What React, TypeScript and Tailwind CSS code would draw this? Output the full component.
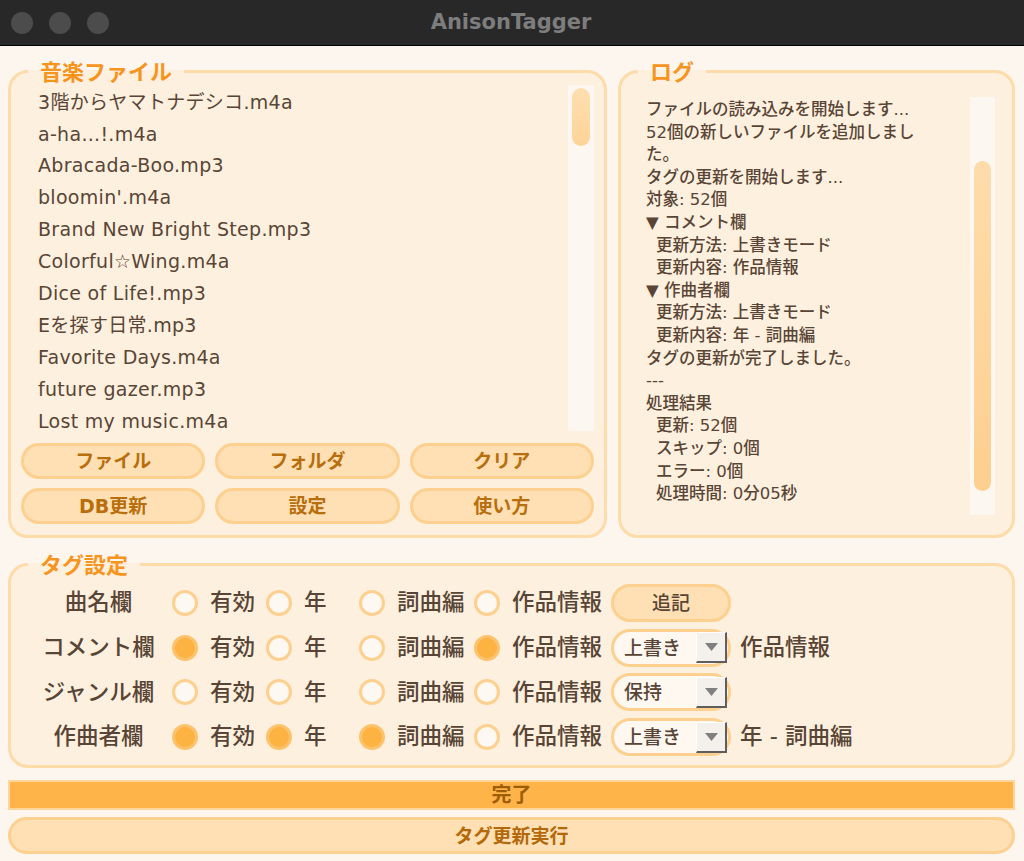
const files = [
  '3階からヤマトナデシコ.m4a',
  'a-ha...!.m4a',
  'Abracada-Boo.mp3',
  "bloomin'.m4a",
  'Brand New Bright Step.mp3',
  'Colorful☆Wing.m4a',
  'Dice of Life!.mp3',
  'Eを探す日常.mp3',
  'Favorite Days.m4a',
  'future gazer.mp3',
  'Lost my music.m4a',
]

const logLines: [string, boolean][] = [
  ['ファイルの読み込みを開始します...', false],
  ['52個の新しいファイルを追加しまし', false],
  ['た。', false],
  ['タグの更新を開始します...', false],
  ['対象: 52個', false],
  ['▼ コメント欄', false],
  ['更新方法: 上書きモード', true],
  ['更新内容: 作品情報', true],
  ['▼ 作曲者欄', false],
  ['更新方法: 上書きモード', true],
  ['更新内容: 年 - 詞曲編', true],
  ['タグの更新が完了しました。', false],
  ['---', false],
  ['処理結果', false],
  ['更新: 52個', true],
  ['スキップ: 0個', true],
  ['エラー: 0個', true],
  ['処理時間: 0分05秒', true],
]

type Row = {
  label: string
  checks: boolean[]
  control: 'button' | 'select'
  value: string
  note?: string
}

const rows: Row[] = [
  { label: '曲名欄', checks: [false, false, false, false], control: 'button', value: '追記' },
  { label: 'コメント欄', checks: [true, false, false, true], control: 'select', value: '上書き', note: '作品情報' },
  { label: 'ジャンル欄', checks: [false, false, false, false], control: 'select', value: '保持' },
  { label: '作曲者欄', checks: [true, true, true, false], control: 'select', value: '上書き', note: '年 - 詞曲編' },
]

const options = ['有効', '年', '詞曲編', '作品情報']
const cellWidths = ['w-[94px]', 'w-[93px]', 'w-[115px]', 'w-[137px]']

function Legend({ children }: { children: string }) {
  return (
    <legend className="ml-[7px] px-3 font-['Noto_Sans','Noto_Sans_CJK_JP',sans-serif] text-[22px] leading-[28px] font-bold text-[#f7941d]">
      {children}
    </legend>
  )
}

function Radio({ on }: { on: boolean }) {
  return (
    <span
      className={`w-[26px] h-[26px] rounded-full border-[3px] flex-shrink-0 ${
        on ? 'bg-[#fdb342] border-[#fdc26c]' : 'bg-[#fef8f2] border-[#fdd08f]'
      }`}
    />
  )
}

function PillButton({ children }: { children: string }) {
  return (
    <button className="h-[36px] rounded-full border-[3px] border-[#fdd08f] bg-[#fee0b4] text-[19px] font-bold text-[#b86e0c]">
      {children}
    </button>
  )
}

function Select({ value }: { value: string }) {
  return (
    <div className="w-[120px] h-[38px] rounded-full border-[3px] border-[#fdd08f] bg-[#fef8f1] flex items-center justify-between pl-[10px] pr-[1px]">
      <span className="text-[19px] font-medium text-[#584535]">{value}</span>
      <span className="w-[31px] h-[31px] flex items-center justify-center bg-[#f4f1ec] border-l border-t border-white border-r-2 border-b-2 border-r-[#5e5e5e] border-b-[#5e5e5e]">
        <svg width="13" height="8" viewBox="0 0 13 8">
          <polygon points="0,0 13,0 6.5,8" fill="#808080" />
        </svg>
      </span>
    </div>
  )
}

export default function App() {
  return (
    <div className="w-[1024px] h-[861px] overflow-hidden bg-[#fdf6ef] text-[#584535] font-['DejaVu_Sans','Noto_Sans_CJK_JP',sans-serif]">
      {/* title bar */}
      <div className="h-[46px] bg-[#282828] border-b border-black flex items-center">
        <div className="flex gap-[16px] pl-[11px]">
          <span className="w-[22px] h-[22px] rounded-full bg-[#4c4c4c]" />
          <span className="w-[22px] h-[22px] rounded-full bg-[#4c4c4c]" />
          <span className="w-[22px] h-[22px] rounded-full bg-[#4c4c4c]" />
        </div>
        <div className="flex-1 text-center pr-[111px] text-[21px] font-bold text-[#7d7d7d]">AnisonTagger</div>
      </div>

      <div className="pl-[8px] pr-[9px]">
        <div className="flex gap-[11px] mt-[11px]">
          {/* music files */}
          <fieldset className="w-[599px] min-w-0 rounded-[20px] border-[3px] border-[#fddcaa] bg-[#fef0df] px-[10px] pb-[8px]">
            <Legend>音楽ファイル</Legend>
            <div className="flex h-[348px]">
              <ul className="flex-1 pl-[17px] pt-[1px] overflow-hidden">
                {files.map((f) => (
                  <li key={f} className="h-[31.9px] flex items-center text-[19px] tracking-[0.3px] whitespace-nowrap">
                    {f}
                  </li>
                ))}
              </ul>
              <div className="w-[26px] h-[346px] bg-[#fdf7f1] px-[4px] pt-[3px]">
                <div className="h-[58px] rounded-full bg-gradient-to-b from-[#fedfb0] to-[#fdd397]" />
              </div>
            </div>
            <div className="grid grid-cols-3 gap-x-[10px] gap-y-[9px] mt-[10px]">
              <PillButton>ファイル</PillButton>
              <PillButton>フォルダ</PillButton>
              <PillButton>クリア</PillButton>
              <PillButton>DB更新</PillButton>
              <PillButton>設定</PillButton>
              <PillButton>使い方</PillButton>
            </div>
          </fieldset>

          {/* log */}
          <fieldset className="flex-1 min-w-0 rounded-[20px] border-[3px] border-[#fddcaa] bg-[#fef0df] px-[10px] pb-[10px]">
            <Legend>ログ</Legend>
            <div className="flex h-[428px] mt-[12px]">
              <div className="flex-1 pl-[15px] pt-[2px] text-[16.5px] font-medium">
                {logLines.map(([t, indent], i) => (
                  <div key={i} className={`h-[22.6px] leading-[22.6px] whitespace-nowrap ${indent ? 'pl-[10px]' : ''}`}>
                    {t}
                  </div>
                ))}
              </div>
              <div className="w-[25px] h-[418px] mr-[7px] bg-[#fdf7f1] px-[4px] pt-[64px]">
                <div className="h-[330px] rounded-full bg-gradient-to-b from-[#fedcaa] to-[#fdcf8f]" />
              </div>
            </div>
          </fieldset>
        </div>

        {/* tag settings */}
        <fieldset className="mt-[12px] rounded-[20px] border-[3px] border-[#fddcaa] bg-[#fef0df] px-[10px] pt-[3px] pb-[6px]">
          <Legend>タグ設定</Legend>
          {rows.map((r) => (
            <div key={r.label} className="h-[44.6px] flex items-center text-[22.5px] font-medium">
              <span className="w-[117px] ml-[19px] mr-[15px] text-center whitespace-nowrap">{r.label}</span>
              {options.map((o, i) => (
                <div key={o} className={`${cellWidths[i]} flex items-center gap-[12px]`}>
                  <Radio on={r.checks[i]} />
                  <span className="whitespace-nowrap">{o}</span>
                </div>
              ))}
              {r.control === 'button' ? (
                <button className="w-[120px] h-[38px] rounded-full border-[3px] border-[#fdd08f] bg-[#fee0b4] text-[19px] font-medium text-[#584535]">
                  {r.value}
                </button>
              ) : (
                <Select value={r.value} />
              )}
              {r.note && <span className="ml-[9px] whitespace-nowrap">{r.note}</span>}
            </div>
          ))}
        </fieldset>

        {/* progress */}
        <div className="mt-[12px] h-[30px] border-2 border-[#fed69c] bg-[#feb448] flex items-center justify-center text-[20px] font-bold text-[#9e5d0a]">
          完了
        </div>

        <button className="mt-[7px] w-full h-[37px] rounded-full border-[3px] border-[#fdd08f] bg-[#fee0b4] text-[19px] font-bold text-[#b3690a]">
          タグ更新実行
        </button>
      </div>
    </div>
  )
}
